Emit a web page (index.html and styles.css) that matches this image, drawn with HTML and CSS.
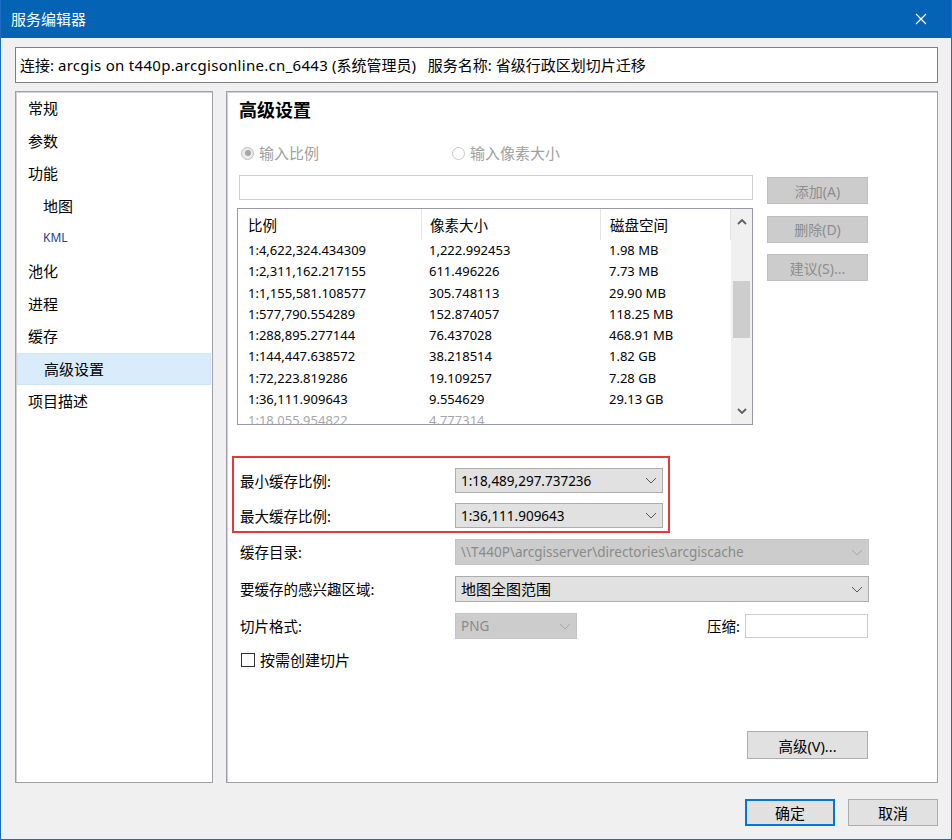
FILE: index.html
```html
<!DOCTYPE html>
<html lang="zh-CN">
<head>
<meta charset="utf-8">
<title>服务编辑器</title>
<link rel="stylesheet" href="styles.css">
</head>
<body>
<div class="window">
  <div class="titlebar">
    <span class="title">服务编辑器</span>
    <svg class="close" width="12" height="12" viewBox="0 0 12 12"><path d="M1 1 L11 11 M11 1 L1 11" stroke="#fff" stroke-width="1.2" fill="none"/></svg>
  </div>
  <div class="content">
    <div class="conn">连接: <span class="latin">arcgis on t440p.arcgisonline.cn_6443</span> (系统管理员)&nbsp;&nbsp;&nbsp;服务名称: 省级行政区划切片迁移</div>
    <div class="main">
      <ul class="nav">
        <li class="nav-item">常规</li>
        <li class="nav-item">参数</li>
        <li class="nav-item">功能</li>
        <li class="nav-item sub">地图</li>
        <li class="nav-item sub kml">KML</li>
        <li class="nav-item">池化</li>
        <li class="nav-item">进程</li>
        <li class="nav-item">缓存</li>
        <li class="nav-item sub selected">高级设置</li>
        <li class="nav-item">项目描述</li>
      </ul>
      <div class="panel">
        <h2 class="heading">高级设置</h2>
        <div class="radio-row">
          <div class="radio-item first"><span class="radio checked"></span><span class="radio-text">输入比例</span></div>
          <div class="radio-item"><span class="radio"></span><span class="radio-text">输入像素大小</span></div>
        </div>
        <div class="scale-area">
          <div class="scale-left">
            <div class="text-input wide"></div>
            <div class="table">
              <div class="grid">
                <div class="row header">
                  <div class="cell c1">比例</div>
                  <div class="cell c2 sep">像素大小</div>
                  <div class="cell c3 sep">磁盘空间</div>
                </div>
                <div class="row"><div class="cell c1">1:4,622,324.434309</div><div class="cell c2">1,222.992453</div><div class="cell c3">1.98 MB</div></div>
                <div class="row"><div class="cell c1">1:2,311,162.217155</div><div class="cell c2">611.496226</div><div class="cell c3">7.73 MB</div></div>
                <div class="row"><div class="cell c1">1:1,155,581.108577</div><div class="cell c2">305.748113</div><div class="cell c3">29.90 MB</div></div>
                <div class="row"><div class="cell c1">1:577,790.554289</div><div class="cell c2">152.874057</div><div class="cell c3">118.25 MB</div></div>
                <div class="row"><div class="cell c1">1:288,895.277144</div><div class="cell c2">76.437028</div><div class="cell c3">468.91 MB</div></div>
                <div class="row"><div class="cell c1">1:144,447.638572</div><div class="cell c2">38.218514</div><div class="cell c3">1.82 GB</div></div>
                <div class="row"><div class="cell c1">1:72,223.819286</div><div class="cell c2">19.109257</div><div class="cell c3">7.28 GB</div></div>
                <div class="row"><div class="cell c1">1:36,111.909643</div><div class="cell c2">9.554629</div><div class="cell c3">29.13 GB</div></div>
                <div class="row faded"><div class="cell c1">1:18,055.954822</div><div class="cell c2">4.777314</div><div class="cell c3"></div></div>
              </div>
              <div class="scrollbar">
                <div class="sb-btn"><svg width="10" height="6" viewBox="0 0 10 6"><path d="M1 5 L5 1 L9 5" stroke="#606060" stroke-width="1.8" fill="none"/></svg></div>
                <div class="sb-track"><div class="sb-thumb"></div></div>
                <div class="sb-btn"><svg width="10" height="6" viewBox="0 0 10 6"><path d="M1 1 L5 5 L9 1" stroke="#606060" stroke-width="1.8" fill="none"/></svg></div>
              </div>
            </div>
          </div>
          <div class="side-buttons">
            <div class="btn disabled">添加(A)</div>
            <div class="btn disabled">删除(D)</div>
            <div class="btn disabled">建议(S)...</div>
          </div>
        </div>
        <div class="redbox">
          <div class="form-row">
            <span class="label">最小缓存比例:</span>
            <div class="combo small"><span class="combo-text">1:18,489,297.737236</span><svg class="chev" width="12" height="7" viewBox="0 0 12 7"><path d="M1 1 L6 6 L11 1" stroke="#555" stroke-width="1" fill="none"/></svg></div>
          </div>
          <div class="form-row">
            <span class="label">最大缓存比例:</span>
            <div class="combo small"><span class="combo-text">1:36,111.909643</span><svg class="chev" width="12" height="7" viewBox="0 0 12 7"><path d="M1 1 L6 6 L11 1" stroke="#555" stroke-width="1" fill="none"/></svg></div>
          </div>
        </div>
        <div class="form">
          <div class="form-row tall">
            <span class="label">缓存目录:</span>
            <div class="combo full disabled"><span class="combo-text">\\T440P\arcgisserver\directories\arcgiscache</span><svg class="chev" width="12" height="7" viewBox="0 0 12 7"><path d="M1 1 L6 6 L11 1" stroke="#a8a8a8" stroke-width="1" fill="none"/></svg></div>
          </div>
          <div class="form-row tall">
            <span class="label">要缓存的感兴趣区域:</span>
            <div class="combo full"><span class="combo-text cjk">地图全图范围</span><svg class="chev" width="12" height="7" viewBox="0 0 12 7"><path d="M1 1 L6 6 L11 1" stroke="#555" stroke-width="1" fill="none"/></svg></div>
          </div>
          <div class="form-row tall">
            <span class="label">切片格式:</span>
            <div class="combo png disabled"><span class="combo-text">PNG</span><svg class="chev" width="12" height="7" viewBox="0 0 12 7"><path d="M1 1 L6 6 L11 1" stroke="#a8a8a8" stroke-width="1" fill="none"/></svg></div>
            <span class="label compress">压缩:</span>
            <div class="text-input compress-input"></div>
          </div>
          <div class="check-row">
            <span class="checkbox"></span><span class="check-text">按需创建切片</span>
          </div>
          <div class="adv-row">
            <div class="btn adv">高级(V)...</div>
          </div>
        </div>
      </div>
    </div>
    <div class="footer">
      <div class="btn foot primary">确定</div>
      <div class="btn foot">取消</div>
    </div>
  </div>
</div>
</body>
</html>
```

FILE: styles.css
```css
* { box-sizing: border-box; }
html, body { margin: 0; padding: 0; }
body {
  width: 952px;
  height: 840px;
  overflow: hidden;
  background: #f0f0f0;
  font-family: "Noto Sans", "Noto Sans CJK SC", sans-serif;
  color: #000;
}
.window {
  width: 952px;
  height: 840px;
  border: 1px solid #1a6cc0;
  border-top: 0;
  background: #f0f0f0;
}
.titlebar {
  height: 38px;
  background: #0563b5;
  display: flex;
  align-items: center;
  justify-content: space-between;
  padding: 0 24px 0 10px;
}
.title {
  color: #fff;
  font-size: 15px;
  line-height: 20px;
}
.close { display: block; }
.content {
  padding: 9px 13px 0 14px;
}
.conn {
  height: 36px;
  background: #fff;
  border: 1px solid #7f7f7f;
  font-size: 15px;
  line-height: 34px;
  padding-left: 4px;
  white-space: nowrap;
}
.latin { letter-spacing: 0.3px; }
.main {
  margin-top: 8px;
  height: 692px;
  display: flex;
  gap: 13px;
}
.nav {
  width: 198px;
  margin: 0;
  padding: 0;
  list-style: none;
  background: #fff;
  border: 1px solid #a0a0a8;
  box-shadow: inset 1px 1px 0 #d0d0d6;
}
.nav-item {
  height: 32.6px;
  line-height: 32.6px;
  font-size: 15px;
  padding-left: 11px;
  margin: 0 1px;
  white-space: nowrap;
}
.nav-item.sub { padding-left: 26px; }
.nav-item.kml {
  font-size: 12px;
  color: #2b3d8d;
}
.nav-item.selected {
  background: #d9ecfb;
  border: 1px solid #cfe5f7;
  line-height: 30.6px;
}
.panel {
  flex: 1;
  background: #fff;
  border: 1px solid #a0a0a8;
  box-shadow: inset 1px 1px 0 #d0d0d6;
  padding-left: 12px;
}
.heading {
  margin: 4px 0 0 0;
  height: 28px;
  line-height: 28px;
  font-size: 18px;
  font-weight: bold;
}
.radio-row {
  margin-top: 17px;
  height: 24px;
  display: flex;
  align-items: center;
  padding-left: 2px;
}
.radio-item {
  display: flex;
  align-items: center;
  gap: 5px;
}
.radio-item.first { width: 211px; }
.radio {
  width: 13px;
  height: 13px;
  border-radius: 50%;
  border: 1px solid #c6c6c6;
  background: #fff;
  position: relative;
}
.radio.checked { background: #ececec; border-color: #bcbcbc; }
.radio.checked::after {
  content: "";
  position: absolute;
  left: 2.5px;
  top: 2.5px;
  width: 6px;
  height: 6px;
  border-radius: 50%;
  background: #a6a6a6;
}
.radio-text {
  color: #a0a0a0;
  font-size: 15px;
  line-height: 20px;
}
.scale-area {
  margin-top: 10px;
  display: flex;
  gap: 14px;
}
.scale-left { width: 514px; }
.text-input {
  background: #fff;
  border: 1px solid #cdcdcd;
}
.text-input.wide { height: 25px; }
.table {
  margin-top: 8px;
  margin-left: -2px;
  width: 516px;
  height: 217px;
  border: 1px solid #9a9aa2;
  display: flex;
}
.grid {
  flex: 1;
  overflow: hidden;
}
.row {
  display: flex;
  height: 21.3px;
  line-height: 21.3px;
  font-size: 13px;
  white-space: nowrap;
}
.row.header {
  height: 31px;
  line-height: 33px;
  font-size: 14.5px;
}
.row.faded { color: #a8a8a8; }
.cell { padding-left: 10px; overflow: hidden; }
.c1 { width: 183px; }
.c2 { width: 179px; padding-left: 8px; }
.c3 { flex: 1; padding-left: 9px; }
.header .sep { border-left: 1px solid #e3e3e3; }
.header .c3 { border-right: 1px solid #e3e3e3; }
.scrollbar {
  width: 21px;
  background: #f0f0f0;
  display: flex;
  flex-direction: column;
}
.sb-btn {
  height: 26px;
  display: flex;
  align-items: center;
  justify-content: center;
}
.sb-track { flex: 1; padding-top: 46px; }
.sb-thumb {
  height: 57px;
  margin: 0 2px;
  background: #cdcdcd;
}
.side-buttons {
  width: 101px;
  margin-top: 2px;
  display: flex;
  flex-direction: column;
  gap: 11.5px;
}
.btn {
  height: 27px;
  display: flex;
  align-items: center;
  justify-content: center;
  font-size: 14px;
  background: #e1e1e1;
  border: 1px solid #adadad;
  white-space: nowrap;
}
.btn.disabled {
  background: #cccccc;
  border-color: #bfbfbf;
  color: #8d8d8d;
}
.redbox {
  margin-top: 31px;
  margin-left: -7px;
  width: 438px;
  border: 2px solid #e8373b;
  padding: 10px 5px 3px 6px;
  display: flex;
  flex-direction: column;
  gap: 10px;
}
.form-row {
  display: flex;
  align-items: center;
  height: 25px;
}
.label {
  width: 215px;
  font-size: 14.5px;
  line-height: 20px;
  white-space: nowrap;
}
.combo {
  height: 25px;
  background: #e1e1e1;
  border: 1px solid #adadad;
  display: flex;
  align-items: center;
  justify-content: space-between;
  padding: 0 5px 0 5px;
}
.combo-text {
  font-size: 13.5px;
  line-height: 20px;
  white-space: nowrap;
}
.combo-text.cjk { font-size: 15px; }
.combo.small { width: 208px; }
.combo.disabled {
  background: #cccccc;
  border-color: #c4c4c4;
  color: #8a8a8a;
}
.chev { display: block; }
.form {
  margin-top: 6px;
  padding-left: 1px;
}
.form-row.tall {
  height: 26px;
  margin-bottom: 11px;
}
.form-row.tall .combo { height: 26px; }
.form .label { width: 215px; }
.combo.full { width: 414px; }
.combo.png { width: 122px; }
.label.compress {
  width: auto;
  margin-left: 130px;
  margin-right: 5px;
}
.compress-input {
  width: 123px;
  height: 24px;
}
.check-row {
  margin-top: -2px;
  height: 24px;
  display: flex;
  align-items: center;
  padding-left: 1px;
}
.checkbox {
  width: 14px;
  height: 14px;
  border: 1px solid #333;
  background: #fff;
}
.check-text {
  margin-left: 5px;
  font-size: 15px;
  line-height: 20px;
}
.adv-row {
  margin-top: 59px;
  display: flex;
  padding-left: 507px;
}
.btn.adv {
  width: 121px;
  height: 28px;
  font-size: 14.5px;
}
.footer {
  margin-top: 16px;
  display: flex;
  justify-content: flex-end;
  gap: 13px;
}
.btn.foot {
  width: 90px;
  height: 27px;
  font-size: 15px;
}
.btn.primary {
  border: 2px solid #0078d7;
}
```
